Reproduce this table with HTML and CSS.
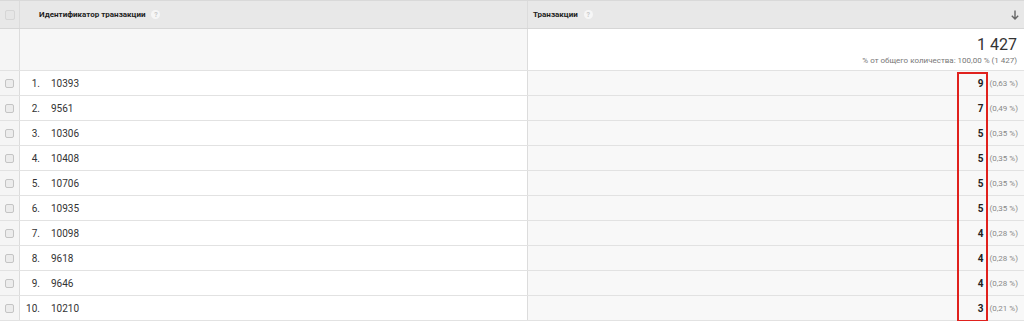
FILE: index.html
```
<!DOCTYPE html>
<html lang="ru">
<head>
<meta charset="utf-8">
<link rel="stylesheet" href="styles.css">
</head>
<body>
<div class="table">
  <div class="row head">
    <div class="cb-cell"><span class="cb big"></span></div>
    <div class="c1"><span class="htext">Идентификатор транзакции</span><span class="q">?</span></div>
    <div class="c2"><span class="htext">Транзакции</span><span class="q">?</span><svg class="sort" width="8" height="10" viewBox="0 0 8 10"><path d="M4 0.5V9M0.8 5.8L4 9L7.2 5.8" fill="none" stroke="#666" stroke-width="1.4"/></svg></div>
  </div>
  <div class="row summary">
    <div class="cb-cell"></div>
    <div class="c1"></div>
    <div class="c2 sum">
      <div class="total">1 427</div>
      <div class="sub">% от общего количества: 100,00 % (1 427)</div>
    </div>
  </div>
  <div class="row data"><div class="cb-cell"><span class="cb"></span></div><div class="c1"><span class="num">1.</span><span class="id">10393</span></div><div class="c2"><span class="val">9</span><span class="pct">(0,63 %)</span></div></div>
  <div class="row data"><div class="cb-cell"><span class="cb"></span></div><div class="c1"><span class="num">2.</span><span class="id">9561</span></div><div class="c2"><span class="val">7</span><span class="pct">(0,49 %)</span></div></div>
  <div class="row data"><div class="cb-cell"><span class="cb"></span></div><div class="c1"><span class="num">3.</span><span class="id">10306</span></div><div class="c2"><span class="val">5</span><span class="pct">(0,35 %)</span></div></div>
  <div class="row data"><div class="cb-cell"><span class="cb"></span></div><div class="c1"><span class="num">4.</span><span class="id">10408</span></div><div class="c2"><span class="val">5</span><span class="pct">(0,35 %)</span></div></div>
  <div class="row data"><div class="cb-cell"><span class="cb"></span></div><div class="c1"><span class="num">5.</span><span class="id">10706</span></div><div class="c2"><span class="val">5</span><span class="pct">(0,35 %)</span></div></div>
  <div class="row data"><div class="cb-cell"><span class="cb"></span></div><div class="c1"><span class="num">6.</span><span class="id">10935</span></div><div class="c2"><span class="val">5</span><span class="pct">(0,35 %)</span></div></div>
  <div class="row data"><div class="cb-cell"><span class="cb"></span></div><div class="c1"><span class="num">7.</span><span class="id">10098</span></div><div class="c2"><span class="val">4</span><span class="pct">(0,28 %)</span></div></div>
  <div class="row data"><div class="cb-cell"><span class="cb"></span></div><div class="c1"><span class="num">8.</span><span class="id">9618</span></div><div class="c2"><span class="val">4</span><span class="pct">(0,28 %)</span></div></div>
  <div class="row data"><div class="cb-cell"><span class="cb"></span></div><div class="c1"><span class="num">9.</span><span class="id">9646</span></div><div class="c2"><span class="val">4</span><span class="pct">(0,28 %)</span></div></div>
  <div class="row data"><div class="cb-cell"><span class="cb"></span></div><div class="c1"><span class="num">10.</span><span class="id">10210</span></div><div class="c2"><span class="val">3</span><span class="pct">(0,21 %)</span></div></div>
  <div class="highlight"></div>
</div>
</body>
</html>
```
FILE: styles.css
```
* { box-sizing: border-box; }
html, body { margin: 0; padding: 0; background: #fff; }
body { font-family: Roboto, "Liberation Sans", Arial, sans-serif; color: #333; }
.table { position: relative; width: 1024px; border-top: 1px solid #d9d9d9; }
.row { display: grid; grid-template-columns: 20px 508px 1fr; border-bottom: 1px solid #e2e2e2; }
.row > div { border-right: 1px solid #dcdcdc; }
.row > div:last-child { border-right: none; }
.head { height: 28px; background: #e8e8e8; border-bottom-color: #d6d6d6; }
.head > div { display: flex; align-items: center; }
.cb-cell { display: flex; align-items: center; justify-content: center; background: #f5f5f5; }
.head .cb-cell { background: #e8e8e8; }
.cb { display: block; width: 9px; height: 9px; border: 1px solid #c4c4c4; border-radius: 2px; background: #ececec; }
.cb.big { width: 10px; height: 10px; border-color: #d6d6d6; background: #e6e6e6; }
.head .c1 { padding-left: 19px; }
.head .c2 { padding-left: 5px; padding-right: 5px; }
.htext { font-size: 8px; font-weight: 700; color: #222; }
.q { display: inline-flex; width: 9px; height: 9px; border-radius: 50%; background: #f6f6f6; color: #c9c9c9; font-size: 7px; font-weight: 700; align-items: center; justify-content: center; margin-left: 6px; }
.sort { margin-left: auto; }
.summary { height: 42px; }
.summary .c1 { background: #f7f7f7; }
.summary .cb-cell { background: #f5f5f5; }
.sum { background: #fff; display: flex; flex-direction: column; align-items: flex-end; padding-right: 7px; padding-top: 7px; }
.total { font-size: 16px; color: #333; line-height: 18px; }
.sub { font-size: 8px; color: #777; margin-top: 2px; }
.data { height: 25px; }
.data > div { display: flex; align-items: center; }
.data .c1 { background: #fff; font-size: 10px; color: #333; }
.num { width: 20px; text-align: right; }
.id { margin-left: 11px; }
.data .c2 { background: #f8f8f8; justify-content: flex-end; padding-right: 6px; }
.val { font-size: 10px; font-weight: 700; color: #222; }
.pct { font-size: 8px; color: #888; margin-left: 6px; }
.highlight { position: absolute; left: 957px; top: 71px; width: 31px; height: 250px; border: 2px solid #e0211d; pointer-events: none; }
```
